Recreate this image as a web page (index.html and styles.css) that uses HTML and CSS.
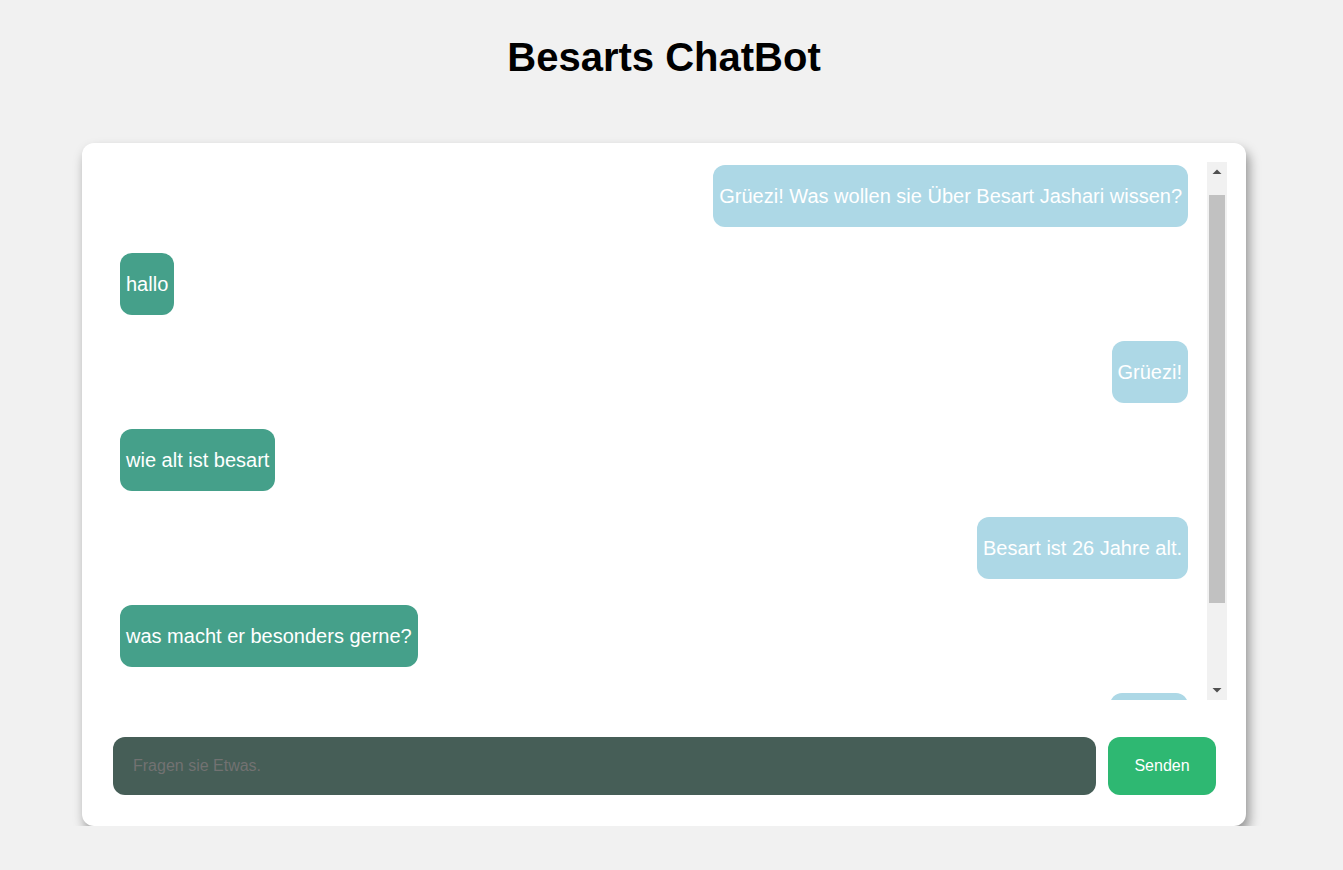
FILE: index.html
```html
<!DOCTYPE html>
<html lang="de">
<head>
<meta charset="utf-8">
<title>Besarts ChatBot</title>
<link rel="stylesheet" href="styles.css">
</head>
<body>
<div class="page">
  <h1 class="title">Besarts ChatBot</h1>
  <div class="card">
    <div class="viewport">
      <div class="chat">
        <div class="msg bot">Grüezi! Was wollen sie Über Besart Jashari wissen?</div>
        <div class="msg user">hallo</div>
        <div class="msg bot">Grüezi!</div>
        <div class="msg user">wie alt ist besart</div>
        <div class="msg bot">Besart ist 26 Jahre alt.</div>
        <div class="msg user">was macht er besonders gerne?</div>
        <div class="msg bot">Joggen</div>
      </div>
      <div class="scrollbar" aria-hidden="true">
        <div class="sb-btn">
          <svg width="10" height="6" viewBox="0 0 10 6"><polygon points="0.5,5 5,0.5 9.5,5" fill="#505050"/></svg>
        </div>
        <div class="sb-track"><div class="sb-thumb"></div></div>
        <div class="sb-btn">
          <svg width="10" height="6" viewBox="0 0 10 6"><polygon points="0.5,1 9.5,1 5,5.5" fill="#505050"/></svg>
        </div>
      </div>
    </div>
    <form class="composer">
      <input class="field" type="text" placeholder="Fragen sie Etwas.">
      <button class="send" type="button">Senden</button>
    </form>
  </div>
</div>
</body>
</html>
```
FILE: styles.css
```css
html, body {
  margin: 0;
  padding: 0;
  background: #f1f1f1;
  font-family: "Liberation Sans", Arial, sans-serif;
}
.page {
  width: 1328px;
  display: flex;
  flex-direction: column;
  align-items: center;
}
.title {
  margin: 34px 0 63px;
  font-size: 40px;
  line-height: 46px;
  font-weight: bold;
  color: #000;
}
.card {
  width: 1164px;
  box-sizing: border-box;
  background: #fff;
  border-radius: 12px;
  padding: 19px 19px 19px 19px;
  box-shadow: 3px 7px 12px rgba(0, 0, 0, 0.4);
}
.viewport {
  display: flex;
  height: 538px;
}
.chat {
  flex: 1;
  overflow: hidden;
  box-sizing: border-box;
  padding: 3px 19px 0 19px;
  display: flex;
  flex-direction: column;
}
.scrollbar {
  width: 20px;
  background: #f1f1f1;
  display: flex;
  flex-direction: column;
}
.sb-btn {
  height: 20px;
  display: flex;
  align-items: center;
  justify-content: center;
}
.sb-btn svg {
  display: block;
}
.sb-track {
  flex: 1;
  padding: 13px 2px 0 2px;
}
.sb-thumb {
  height: 408px;
  background: #c1c1c1;
}
.msg {
  flex: 0 0 auto;
  box-sizing: border-box;
  padding: 20px 6px;
  font-size: 20px;
  line-height: 22px;
  color: #fff;
  border-radius: 12px;
  margin-bottom: 26px;
  max-width: 80%;
}
.bot {
  align-self: flex-end;
  background: #add8e6;
}
.user {
  align-self: flex-start;
  background: #45a08a;
}
.composer {
  margin: 37px 11px 12px 12px;
  display: flex;
  gap: 12px;
}
.field {
  flex: 1;
  height: 58px;
  box-sizing: border-box;
  border: 0;
  outline: none;
  border-radius: 12px;
  background: #465e57;
  color: #fff;
  padding: 0 20px;
  font-family: "Liberation Sans", Arial, sans-serif;
  font-size: 16px;
}
.field::placeholder {
  color: #727272;
}
.send {
  width: 108px;
  height: 58px;
  border: 0;
  border-radius: 12px;
  background: #2eb872;
  color: #fff;
  font-family: "Liberation Sans", Arial, sans-serif;
  font-size: 16px;
  cursor: pointer;
}
```
